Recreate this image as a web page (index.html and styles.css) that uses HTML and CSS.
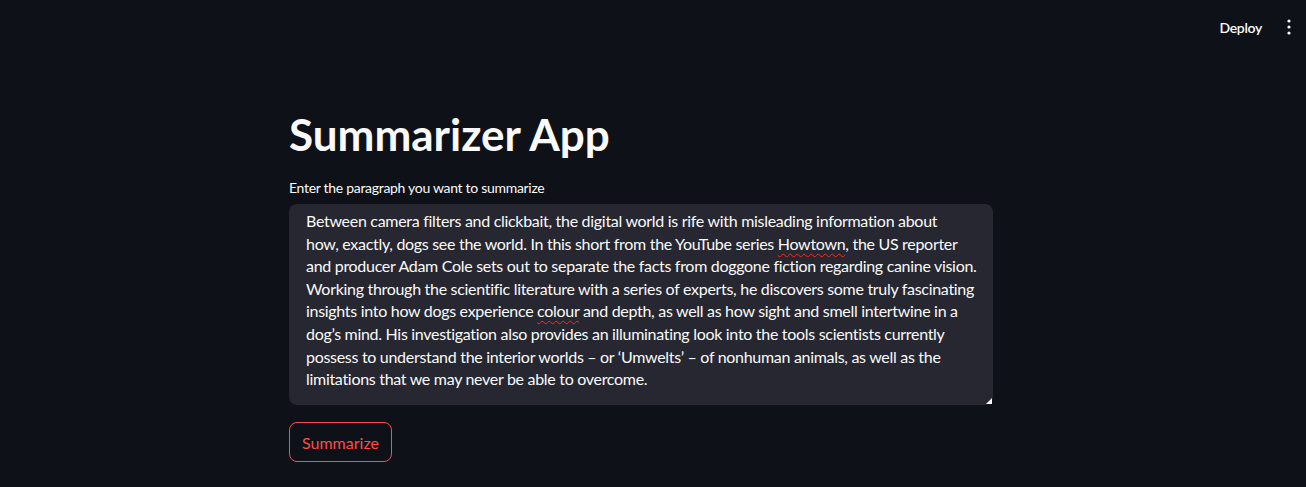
FILE: index.html
```html
<!DOCTYPE html>
<html lang="en">
<head>
<meta charset="utf-8">
<title>Summarizer App</title>
<link rel="stylesheet" href="styles.css">
</head>
<body>
<header class="topbar">
  <span class="deploy">Deploy</span>
  <span class="menu" aria-label="Main menu">
    <svg width="4" height="16" viewBox="0 0 4 16"><circle cx="2" cy="2" r="1.6" fill="#fafafa"/><circle cx="2" cy="8" r="1.6" fill="#fafafa"/><circle cx="2" cy="14" r="1.6" fill="#fafafa"/></svg>
  </span>
</header>
<main class="main">
  <h1 class="title">Summarizer App</h1>
  <label class="label">Enter the paragraph you want to summarize</label>
  <div class="textarea">
    <div class="text">Between camera filters and clickbait, the digital world is rife with misleading information about<br>how, exactly, dogs see the world. In this short from the YouTube series <span class="sp">Howtown</span>, the US reporter<br>and producer Adam Cole sets out to separate the facts from doggone fiction regarding canine vision.<br>Working through the scientific literature with a series of experts, he discovers some truly fascinating<br>insights into how dogs experience <span class="sp">colour</span> and depth, as well as how sight and smell intertwine in a<br>dog’s mind. His investigation also provides an illuminating look into the tools scientists currently<br>possess to understand the interior worlds – or ‘Umwelts’ – of nonhuman animals, as well as the<br>limitations that we may never be able to overcome.</div>
    <span class="grip"></span>
  </div>
  <button class="btn">Summarize</button>
</main>
</body>
</html>
```
FILE: styles.css
```css
* { box-sizing: border-box; }
html, body { margin: 0; padding: 0; }
body {
  background: #0e1117;
  color: #fafafa;
  font-family: Lato, "Noto Sans", sans-serif;
  width: 1306px;
  height: 487px;
  overflow: hidden;
}
.topbar {
  height: 54px;
  display: flex;
  align-items: center;
  justify-content: flex-end;
  padding-right: 15px;
  gap: 25px;
}
.deploy {
  font-size: 14px;
  font-weight: 600;
  letter-spacing: -0.3px;
  color: #fafafa;
}
.menu { display: flex; align-items: center; }
.main {
  width: 704px;
  margin-left: 289px;
  padding-top: 52px;
}
.title {
  margin: 0;
  font-size: 44px;
  font-weight: 700;
  line-height: 56px;
}
.label {
  display: block;
  margin-top: 16px;
  font-size: 14px;
  line-height: 20px;
  letter-spacing: -0.3px;
}
.textarea {
  position: relative;
  margin-top: 6px;
  background: #262730;
  border-radius: 8px;
  height: 201px;
  padding: 6px 16px 0 17px;
}
.text {
  font-size: 16px;
  line-height: 22.6px;
  letter-spacing: -0.3px;
  white-space: nowrap;
}
.sp {
  text-decoration: underline wavy #ff2a1f;
  text-decoration-thickness: 1.3px;
  text-underline-offset: 3px;
}
.grip {
  position: absolute;
  right: 1px;
  bottom: 1px;
  width: 0; height: 0;
  border-left: 6px solid transparent;
  border-bottom: 6px solid #fafafa;
}
.btn {
  margin-top: 17px;
  height: 40px;
  padding: 0 12px;
  background: transparent;
  border: 1px solid #ff4b4b;
  border-radius: 8px;
  color: #ff4b4b;
  font-family: inherit;
  font-size: 16px;
}
```
